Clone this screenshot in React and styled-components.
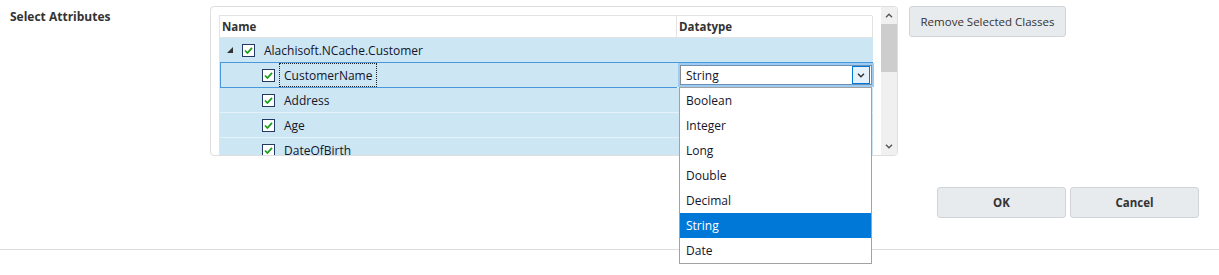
import React from "react";
import styled, { createGlobalStyle } from "styled-components";

const GlobalStyle = createGlobalStyle`
  html, body {
    min-height: 100vh;
  }
  body {
    margin: 0;
    background: #fff;
    font-family: "Open Sans", "Noto Sans", sans-serif;
    font-size: 11px;
    color: #1b1b2b;
  }
`;

const rows = [
  { name: "Alachisoft.NCache.Customer", level: 0, expander: true },
  { name: "CustomerName", level: 1, type: "String", selected: true },
  { name: "Address", level: 1, type: "String" },
  { name: "Age", level: 1, type: "Integer" },
  { name: "DateOfBirth", level: 1, type: "Date" },
];

const types = ["Boolean", "Integer", "Long", "Double", "Decimal", "String", "Date"];

const Page = styled.div`
  padding-top: 6px;
`;

const TopRow = styled.div`
  display: flex;
  align-items: flex-start;
`;

const SectionLabel = styled.div`
  width: 200px;
  padding: 3px 0 0 10px;
  font-size: 12px;
  font-weight: 700;
  color: #333;
  line-height: 16px;
`;

const PanelWrap = styled.div`
  position: relative;
`;

const Panel = styled.div`
  width: 686px;
  height: 148px;
  border: 1px solid #dedede;
  border-radius: 4px;
  display: flex;
  overflow: hidden;
`;

const TableWrap = styled.div`
  padding: 8px 9px 0 8px;
  width: 653px;
  overflow: hidden;
`;

const Table = styled.div`
  display: grid;
  grid-template-columns: 457px 196px;
  border-top: 1px solid #e3e3e3;
  border-left: 1px solid #e3e3e3;
`;

const HeadCell = styled.div`
  height: 21px;
  line-height: 21px;
  padding-left: 2px;
  font-size: 11.5px;
  font-weight: 700;
  color: #333;
  background: #fff;
  border-bottom: 1px solid #e3e3e3;
  border-right: 1px solid #e3e3e3;
`;

const NameCell = styled.div`
  height: 24px;
  display: flex;
  align-items: stretch;
  padding-left: ${(p) => 7 + p.$level * 20}px;
  background: #cce6f4;
  border-bottom: 1px solid ${(p) => (p.$selected ? "#4a98dc" : "#e6f2fa")};
  border-top: ${(p) => (p.$selected ? "1px solid #4a98dc" : "0")};
  margin-top: ${(p) => (p.$selected ? "-1px" : "0")};
  box-shadow: ${(p) => (p.$selected ? "inset 1px 0 0 #4a98dc" : "none")};
`;

const TypeCell = styled.div`
  position: relative;
  height: 24px;
  background: #cce6f4;
  border-bottom: 1px solid #e6f2fa;
  border-top: ${(p) => (p.$selected ? "1px solid #4a98dc" : "0")};
  margin-top: ${(p) => (p.$selected ? "-1px" : "0")};
`;

const ExpanderSlot = styled.div`
  width: 15px;
  display: flex;
  align-items: center;
`;

const CheckSlot = styled.div`
  width: 13px;
  display: flex;
  align-items: center;
  margin-right: 4px;
`;

const RowLabel = styled.div`
  display: flex;
  align-items: center;
  padding: 0 4px;
  border: 1px dotted ${(p) => (p.$focused ? "#222" : "transparent")};
  color: #14142a;
  font-size: 12px;
`;

const Combo = styled.div`
  position: absolute;
  inset: 0 -1px 0 1px;
  border: 2px solid ${(p) => (p.$open ? "#9dcbf1" : "transparent")};
  display: flex;
`;

const ComboField = styled.div`
  flex: 1;
  display: flex;
  align-items: center;
  background: #fff;
  border: 1px solid #6f8fb5;
  border-left-color: #8a8a8a;
  padding-left: 5px;
  font-size: 12px;
  color: #14142a;
`;

const ComboButton = styled.div`
  width: 16px;
  height: 16px;
  margin: 1px 1px 1px auto;
  border: 1px solid #0078d7;
  background: #e5f1fb;
  display: flex;
  align-items: center;
  justify-content: center;
`;

const DropList = styled.ul`
  position: absolute;
  top: 81px;
  left: 469px;
  width: 191px;
  margin: 0;
  padding: 0;
  list-style: none;
  background: #fff;
  border: 1px solid #a2a2a2;
  z-index: 5;
`;

const DropItem = styled.li`
  height: 25px;
  line-height: 25px;
  padding-left: 6px;
  font-size: 12px;
  color: ${(p) => (p.$active ? "#fff" : "#14142a")};
  background: ${(p) => (p.$active ? "#0078d7" : "#fff")};
`;

const ScrollBar = styled.div`
  width: 16px;
  display: flex;
  flex-direction: column;
  background: #f0f0f0;
`;

const ScrollArrow = styled.div`
  height: 17px;
  display: flex;
  align-items: center;
  justify-content: center;
`;

const ScrollThumb = styled.div`
  height: 48px;
  background: #cdcdcd;
`;

const ScrollTrack = styled.div`
  flex: 1;
`;

const Button = styled.button`
  font-family: inherit;
  font-size: 11.5px;
  font-weight: ${(p) => (p.$bold ? 700 : 400)};
  color: #333;
  background: #e8ebee;
  border: 1px solid #d0d4d8;
  border-radius: 3px;
  width: ${(p) => p.$w}px;
  height: ${(p) => p.$h}px;
  padding: 0;
`;

const RemoveButton = styled(Button)`
  margin-left: 11px;
`;

const BottomRow = styled.div`
  display: flex;
  justify-content: flex-end;
  gap: 4px;
  padding-right: 20px;
  margin-top: 31px;
`;

const Divider = styled.hr`
  margin: 31px 0 0;
  border: 0;
  border-top: 1px solid #dcdcdc;
`;

const Expander = () => (
  <svg width="6" height="6" viewBox="0 0 6 6">
    <polygon points="6,0 6,6 0,6" fill="#333" />
  </svg>
);

const CheckBox = () => (
  <svg width="13" height="13" viewBox="0 0 13 13">
    <rect x="0.5" y="0.5" width="12" height="12" fill="#fff" stroke="#243a63" />
    <polyline
      points="3,6.5 5.4,9 10,3.8"
      fill="none"
      stroke="#1a9e1a"
      strokeWidth="1.8"
    />
  </svg>
);

const Chevron = ({ up, color = "#555" }) => (
  <svg width="8" height="5" viewBox="0 0 8 5">
    <polyline
      points={up ? "1,4.2 4,1.2 7,4.2" : "1,0.8 4,3.8 7,0.8"}
      fill="none"
      stroke={color}
      strokeWidth="1.4"
    />
  </svg>
);

const App = () => {
  const selected = rows.find((r) => r.selected);
  return (
    <Page>
      <GlobalStyle />
      <TopRow>
        <SectionLabel>Select Attributes</SectionLabel>
        <PanelWrap>
          <Panel>
            <TableWrap>
              <Table>
                <HeadCell>Name</HeadCell>
                <HeadCell>Datatype</HeadCell>
                {rows.map((row) => (
                  <React.Fragment key={row.name}>
                    <NameCell $level={row.level} $selected={row.selected}>
                      <ExpanderSlot>{row.expander && <Expander />}</ExpanderSlot>
                      <CheckSlot>
                        <CheckBox />
                      </CheckSlot>
                      <RowLabel $focused={row.selected}>{row.name}</RowLabel>
                    </NameCell>
                    <TypeCell $selected={row.selected}>
                      {row.type && (
                        <Combo $open={row.selected}>
                          <ComboField>
                            {row.selected ? row.type : ""}
                            {row.selected && (
                              <ComboButton>
                                <Chevron color="#333" />
                              </ComboButton>
                            )}
                          </ComboField>
                        </Combo>
                      )}
                    </TypeCell>
                  </React.Fragment>
                ))}
              </Table>
            </TableWrap>
            <ScrollBar>
              <ScrollArrow>
                <Chevron up />
              </ScrollArrow>
              <ScrollThumb />
              <ScrollTrack />
              <ScrollArrow>
                <Chevron />
              </ScrollArrow>
            </ScrollBar>
          </Panel>
          <DropList>
            {types.map((t) => (
              <DropItem key={t} $active={t === selected.type}>
                {t}
              </DropItem>
            ))}
          </DropList>
        </PanelWrap>
        <RemoveButton $w={157} $h={31}>
          Remove Selected Classes
        </RemoveButton>
      </TopRow>
      <BottomRow>
        <Button $bold $w={129} $h={31}>
          OK
        </Button>
        <Button $bold $w={129} $h={31}>
          Cancel
        </Button>
      </BottomRow>
      <Divider />
    </Page>
  );
};

export default App;
